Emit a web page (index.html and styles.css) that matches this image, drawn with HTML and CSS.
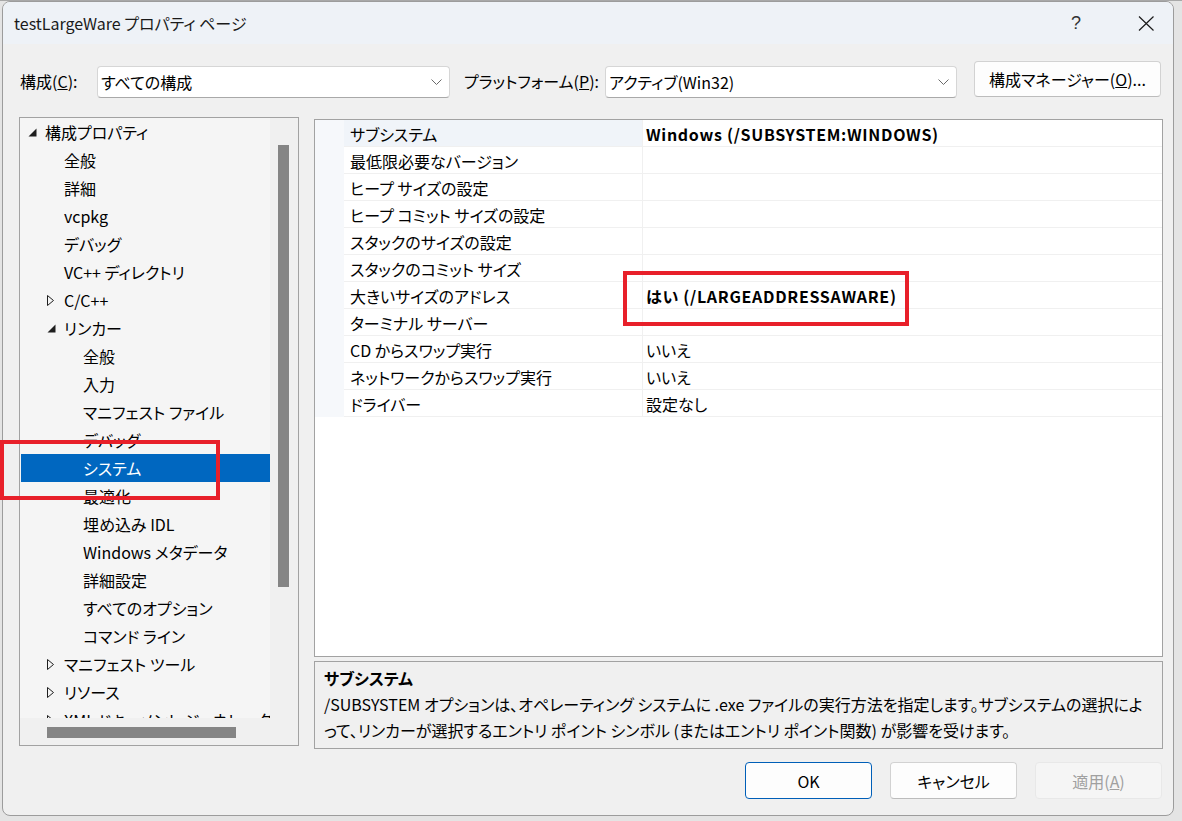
FILE: index.html
```html
<!DOCTYPE html>
<html lang="ja">
<head>
<meta charset="utf-8">
<title>testLargeWare プロパティ ページ</title>
<link rel="stylesheet" href="styles.css">
</head>
<body>
<div class="desk">
  <div class="window">
    <div class="titlebar">
      <span class="title">testLargeWare プロパティ ページ</span>
      <div class="caption">
        <span class="help">?</span>
        <svg class="close" width="17" height="15" viewBox="0 0 17 15"><path d="M1 0.5 L15.5 14.5 M15.5 0.5 L1 14.5" stroke="#1c1c1c" stroke-width="1.2" fill="none"/></svg>
      </div>
    </div>

    <div class="toolbar">
      <span class="lbl lbl-config">構成(<u>C</u>):</span>
      <div class="combo combo-config"><span>すべての構成</span><svg class="chev" width="11" height="7" viewBox="0 0 11 7"><path d="M0.5 0.5 L5.5 5.5 L10.5 0.5" stroke="#6a6a6a" stroke-width="1" fill="none"/></svg></div>
      <span class="lbl lbl-platform">プラットフォーム(<u>P</u>):</span>
      <div class="combo combo-platform"><span>アクティブ(Win32)</span><svg class="chev" width="11" height="7" viewBox="0 0 11 7"><path d="M0.5 0.5 L5.5 5.5 L10.5 0.5" stroke="#6a6a6a" stroke-width="1" fill="none"/></svg></div>
      <button class="btn btn-manager">構成マネージャー(<u>O</u>)...</button>
    </div>

    <div class="main">
      <div class="tree-panel">
        <div class="tree-view">
          <ul class="tree">
            <li class="row lv0"><span class="tw"><svg width="9" height="9" viewBox="0 0 9 9"><path d="M8.5 0.5 L8.5 8.5 L0.5 8.5 Z" fill="#1e1e1e"/></svg></span><span>構成プロパティ</span></li>
            <li class="row lv1"><span class="tw"></span><span>全般</span></li>
            <li class="row lv1"><span class="tw"></span><span>詳細</span></li>
            <li class="row lv1"><span class="tw"></span><span>vcpkg</span></li>
            <li class="row lv1"><span class="tw"></span><span>デバッグ</span></li>
            <li class="row lv1"><span class="tw"></span><span>VC++ ディレクトリ</span></li>
            <li class="row lv1"><span class="tw"><svg width="8" height="11" viewBox="0 0 8 11"><path d="M0.5 0.5 L6.5 5.5 L0.5 10.5 Z" fill="none" stroke="#1e1e1e" stroke-width="1"/></svg></span><span>C/C++</span></li>
            <li class="row lv1"><span class="tw"><svg width="9" height="9" viewBox="0 0 9 9"><path d="M8.5 0.5 L8.5 8.5 L0.5 8.5 Z" fill="#1e1e1e"/></svg></span><span>リンカー</span></li>
            <li class="row lv2"><span class="tw"></span><span>全般</span></li>
            <li class="row lv2"><span class="tw"></span><span>入力</span></li>
            <li class="row lv2"><span class="tw"></span><span>マニフェスト ファイル</span></li>
            <li class="row lv2"><span class="tw"></span><span>デバッグ</span></li>
            <li class="row lv2 selected"><span class="tw"></span><span>システム</span></li>
            <li class="row lv2"><span class="tw"></span><span>最適化</span></li>
            <li class="row lv2"><span class="tw"></span><span>埋め込み IDL</span></li>
            <li class="row lv2"><span class="tw"></span><span>Windows メタデータ</span></li>
            <li class="row lv2"><span class="tw"></span><span>詳細設定</span></li>
            <li class="row lv2"><span class="tw"></span><span>すべてのオプション</span></li>
            <li class="row lv2"><span class="tw"></span><span>コマンド ライン</span></li>
            <li class="row lv1"><span class="tw"><svg width="8" height="11" viewBox="0 0 8 11"><path d="M0.5 0.5 L6.5 5.5 L0.5 10.5 Z" fill="none" stroke="#1e1e1e" stroke-width="1"/></svg></span><span>マニフェスト ツール</span></li>
            <li class="row lv1"><span class="tw"><svg width="8" height="11" viewBox="0 0 8 11"><path d="M0.5 0.5 L6.5 5.5 L0.5 10.5 Z" fill="none" stroke="#1e1e1e" stroke-width="1"/></svg></span><span>リソース</span></li>
            <li class="row lv1"><span class="tw"><svg width="8" height="11" viewBox="0 0 8 11"><path d="M0.5 0.5 L6.5 5.5 L0.5 10.5 Z" fill="none" stroke="#1e1e1e" stroke-width="1"/></svg></span><span>XML ドキュメント ジェネレーター</span></li>
          </ul>
          <div class="vscroll"><div class="vthumb"></div></div>
        </div>
        <div class="hscroll"><div class="hthumb"></div></div>
      </div>

      <div class="right">
        <div class="grid">
          <div class="prow first"><span class="gut"></span><span class="pname">サブシステム</span><span class="pval bold">Windows (/SUBSYSTEM:WINDOWS)</span></div>
          <div class="prow"><span class="gut"></span><span class="pname">最低限必要なバージョン</span><span class="pval"></span></div>
          <div class="prow"><span class="gut"></span><span class="pname">ヒープ サイズの設定</span><span class="pval"></span></div>
          <div class="prow"><span class="gut"></span><span class="pname">ヒープ コミット サイズの設定</span><span class="pval"></span></div>
          <div class="prow"><span class="gut"></span><span class="pname">スタックのサイズの設定</span><span class="pval"></span></div>
          <div class="prow"><span class="gut"></span><span class="pname">スタックのコミット サイズ</span><span class="pval"></span></div>
          <div class="prow"><span class="gut"></span><span class="pname">大きいサイズのアドレス</span><span class="pval bold">はい (/LARGEADDRESSAWARE)</span></div>
          <div class="prow"><span class="gut"></span><span class="pname">ターミナル サーバー</span><span class="pval"></span></div>
          <div class="prow"><span class="gut"></span><span class="pname">CD からスワップ実行</span><span class="pval">いいえ</span></div>
          <div class="prow"><span class="gut"></span><span class="pname">ネットワークからスワップ実行</span><span class="pval">いいえ</span></div>
          <div class="prow"><span class="gut"></span><span class="pname">ドライバー</span><span class="pval">設定なし</span></div>
        </div>
        <div class="desc">
          <div class="desc-title">サブシステム</div>
          <div class="desc-text">/SUBSYSTEM オプションは、オペレーティング システムに .exe ファイルの実行方法を指定します。サブシステムの選択によ<br>って、リンカーが選択するエントリ ポイント シンボル (またはエントリ ポイント関数) が影響を受けます。</div>
        </div>
      </div>
    </div>

    <div class="footer">
      <button class="btn btn-ok">OK</button>
      <button class="btn">キャンセル</button>
      <button class="btn btn-disabled">適用(<u>A</u>)</button>
    </div>
  </div>

  <div class="mark mark-tree"></div>
  <div class="mark mark-value"></div>
</div>
</body>
</html>
```

FILE: styles.css
```css
* { box-sizing: border-box; }

html, body {
  margin: 0;
  padding: 0;
}

body {
  width: 1182px;
  height: 821px;
  overflow: hidden;
  background: #e4e4e4;
  font-family: "Noto Sans CJK JP", sans-serif;
  font-feature-settings: "palt";
  font-size: 16px;
  color: #000;
}

.desk {
  position: relative;
  width: 1182px;
  height: 821px;
  padding: 0 0 0 2px;
  border-top: 1px solid #a8a8a8;
}

.window {
  width: 1172px;
  height: 815px;
  background: #f0f0f0;
  border: 1px solid #9c9c9c;
  border-radius: 8px;
  overflow: hidden;
  display: flex;
  flex-direction: column;
}

/* title bar */
.titlebar {
  height: 42px;
  flex: none;
  background: #eef2f7;
  display: flex;
  align-items: center;
  justify-content: space-between;
  padding: 0 18px 0 11px;
}

.title {
  font-size: 16px;
  line-height: 20px;
  color: #1a1a1a;
}

.caption {
  display: flex;
  align-items: center;
  gap: 57px;
}

.help {
  font-family: "Liberation Sans", sans-serif;
  font-size: 18px;
  color: #333;
  line-height: 20px;
}

.close { display: block; }

/* toolbar */
.toolbar {
  flex: none;
  display: flex;
  align-items: flex-end;
  padding: 17px 12px 0 17px;
  height: 54px;
}

.lbl {
  height: 32px;
  line-height: 31px;
  white-space: nowrap;
}

.lbl-config { width: 77px; }
.lbl-platform { width: 141px; margin-left: 14px; }

.combo {
  height: 32px;
  background: #fff;
  border: 1px solid #d6d6d6;
  border-bottom-color: #a9a9a9;
  border-radius: 4px;
  display: flex;
  align-items: center;
  justify-content: space-between;
  padding: 0 7px 0 3px;
  line-height: 29px;
}

.combo-config { width: 353px; }
.combo-platform { width: 352px; }

.chev { display: block; }

.btn {
  font-family: inherit;
  font-feature-settings: "palt";
  font-size: 16px;
  color: #000;
  height: 37px;
  background: #fdfdfd;
  border: 1px solid #d2d2d2;
  border-bottom-color: #bcbcbc;
  border-radius: 4px;
  padding: 0;
  line-height: 34px;
}

.btn-manager {
  width: 187px;
  height: 36px;
  margin-left: 17px;
  margin-bottom: 1px;
}

/* main */
.main {
  flex: none;
  display: flex;
  padding: 19px 0 0 16px;
}

.tree-panel {
  width: 280px;
  height: 629px;
  border: 1px solid #a2a2a2;
  display: flex;
  flex-direction: column;
  background: #f0f0f0;
}

.tree-view {
  display: flex;
  height: 600px;
}

.tree {
  list-style: none;
  margin: 0;
  padding: 0;
  width: 250px;
  height: 600px;
  overflow: hidden;
  background: #f5f5f5;
}

.row {
  height: 28px;
  display: flex;
  align-items: center;
  white-space: nowrap;
  line-height: 27px;
}

.row.lv0 { padding-left: 8px; }
.row.lv1 { padding-left: 27px; }
.row.lv2 { padding-left: 46px; }

.tw {
  width: 17px;
  flex: none;
  display: flex;
  align-items: center;
}

.tw svg { display: block; }

.row.selected {
  background: #0067c0;
  color: #fff;
  margin-left: 1px;
  padding-left: 45px;
}

.vscroll {
  width: 27px;
  height: 600px;
  padding: 27px 0 0 8px;
  background: #f0f0f0;
}

.vthumb {
  width: 11px;
  height: 442px;
  background: #858585;
}

.hscroll {
  height: 27px;
  display: flex;
  padding: 9px 0 0 27px;
  background: #f0f0f0;
}

.hthumb {
  width: 189px;
  height: 11px;
  background: #858585;
}

.right {
  margin-left: 15px;
  padding-top: 2px;
  display: flex;
  flex-direction: column;
  gap: 4px;
}

.grid {
  width: 849px;
  height: 538px;
  background: #fff;
  border: 1px solid #a2a2a2;
}

.prow {
  height: 27px;
  display: flex;
  line-height: 28px;
  white-space: nowrap;
}

.gut {
  width: 29px;
  flex: none;
  background: #f6f8fb;
}

.pname {
  width: 299px;
  height: 27px;
  flex: none;
  padding-left: 6px;
  border-bottom: 1px solid #f0f0f0;
  border-right: 1px solid #f0f0f0;
  overflow: hidden;
}

.pval {
  flex: 1;
  height: 27px;
  padding-left: 3px;
  border-bottom: 1px solid #f0f0f0;
  overflow: hidden;
}

.prow.first .pname { background: #f0f4f9; }

.bold {
  font-weight: 700;
  letter-spacing: 0.7px;
}

.desc {
  width: 849px;
  height: 88px;
  border: 1px solid #a2a2a2;
  background: #f0f0f0;
  padding: 3px 0 0 9px;
  line-height: 26px;
}

.desc-title { font-weight: 700; }

.desc-text { white-space: nowrap; }

/* footer */
.footer {
  flex: none;
  display: flex;
  justify-content: flex-end;
  gap: 18px;
  padding: 13px 11px 0 0;
}

.footer .btn { width: 127px; }

.btn-ok {
  border: 1px solid #005fb8;
}

.btn-disabled {
  background: #f5f5f5;
  border-color: #e8e8e8;
  color: #a0a0a0;
}

/* red highlight marks (overlay) */
.mark {
  position: absolute;
  border: 4px solid #e8202a;
}

.mark-tree {
  left: 0;
  top: 439px;
  width: 220px;
  height: 60px;
}

.mark-value {
  left: 623px;
  top: 270px;
  width: 286px;
  height: 55px;
}
```
